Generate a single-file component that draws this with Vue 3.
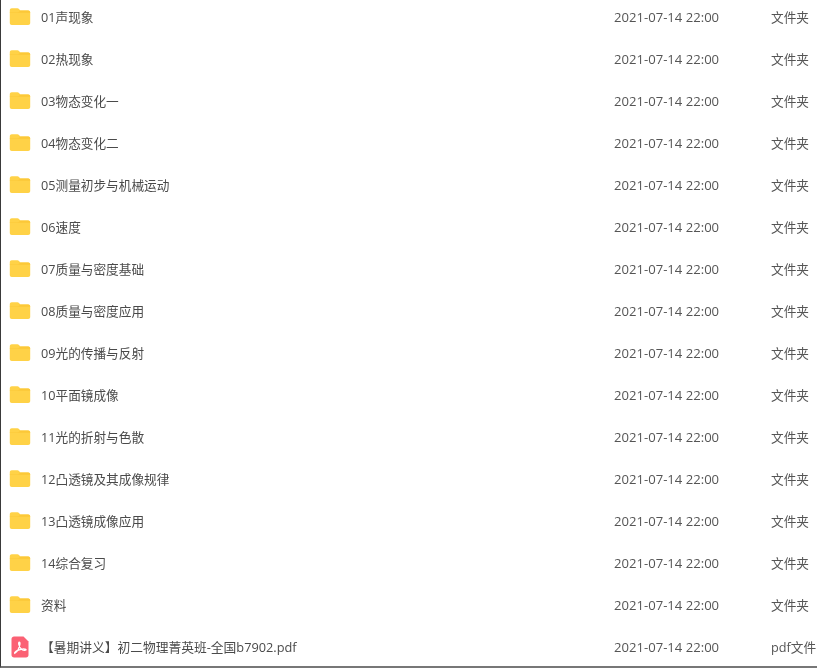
<script setup>
const folders = [
  '01声现象', '02热现象', '03物态变化一', '04物态变化二', '05测量初步与机械运动',
  '06速度', '07质量与密度基础', '08质量与密度应用', '09光的传播与反射', '10平面镜成像',
  '11光的折射与色散', '12凸透镜及其成像规律', '13凸透镜成像应用', '14综合复习', '资料'
]
const files = folders.map(name => ({ name, type: '文件夹', icon: 'folder' }))
files.push({ name: '【暑期讲义】初二物理菁英班-全国b7902.pdf', type: 'pdf文件', icon: 'pdf' })
</script>

<template>
  <div class="page">
    <ul class="list">
      <li v-for="file in files" :key="file.name" class="row">
        <span class="icon">
          <svg v-if="file.icon === 'folder'" width="22" height="18" viewBox="0 0 22 18">
            <path d="M.8 2.200C.8 1 1.600.2 2.800.2h5.600c.7 0 1.200.3 1.600.8l1.300 1.600h7.900c1.200 0 2 .8 2 2V15c0 1.200-.8 2-2 2H2.800c-1.200 0-2-.8-2-2z" fill="#ffd247"/>
            <path d="M.8 4.200h7.800c.7 0 1.200-.2 1.700-.6l1-1h7.900c1.200 0 2 .8 2 2v.2H.8z" fill="#fcc838"/>
          </svg>
          <svg v-else width="18" height="22" viewBox="0 0 18 22">
            <path d="M3 .5h9.500L17.500 5.500V19c0 1.400-1 2.500-2.500 2.500H3C1.600 21.500.5 20.400.5 19V3C.5 1.600 1.600.5 3 .5z" fill="#fb6174"/>
            <path d="M3.800 17.300c2.400-1.500 4.300-4.800 5.100-9 .2-1.200-.1-2.100-.6-2.100-.6 0-.8 1-.5 2.200.9 3.400 2.900 5.700 5.500 6 1.500.2 2.100-.6 1.500-1-1-.7-4.700-.5-8.100 1-1.900.8-3.600 2.200-2.900 2.900z" fill="none" stroke="#fff" stroke-width="1.300"/>
          </svg>
        </span>
        <span class="name" :class="{ long: file.icon === 'pdf' }">{{ file.name }}</span>
        <span class="date">2021-07-14 22:00</span>
        <span class="type">{{ file.type }}</span>
      </li>
    </ul>
  </div>
</template>

<style scoped>
.page {
  box-sizing: border-box;
  height: 668px;
  overflow: hidden;
  background: #fff;
  border-left: 1px solid #3a3a3a;
  border-bottom: 2px solid #777;
  font-family: "Open Sans", "Noto Sans CJK SC", sans-serif;
  font-size: 12.67px;
  color: #4a4a4a;
  filter: blur(0.45px);
}
.list {
  list-style: none;
  margin: -4px 0 0;
  padding: 0;
}
.row {
  display: flex;
  align-items: center;
  height: 42px;
}
.icon {
  display: flex;
  justify-content: center;
  width: 22px;
  margin-left: 8px;
}
.name {
  flex: 1;
  margin-left: 10px;
  margin-bottom: 2px;
  white-space: nowrap;
}
.long {
  font-size: 12.75px;
}
.date {
  width: 157px;
  font-size: 13.1px;
  color: #555;
}
.type {
  width: 46px;
  margin-bottom: 2px;
  white-space: nowrap;
  color: #555;
}
</style>
